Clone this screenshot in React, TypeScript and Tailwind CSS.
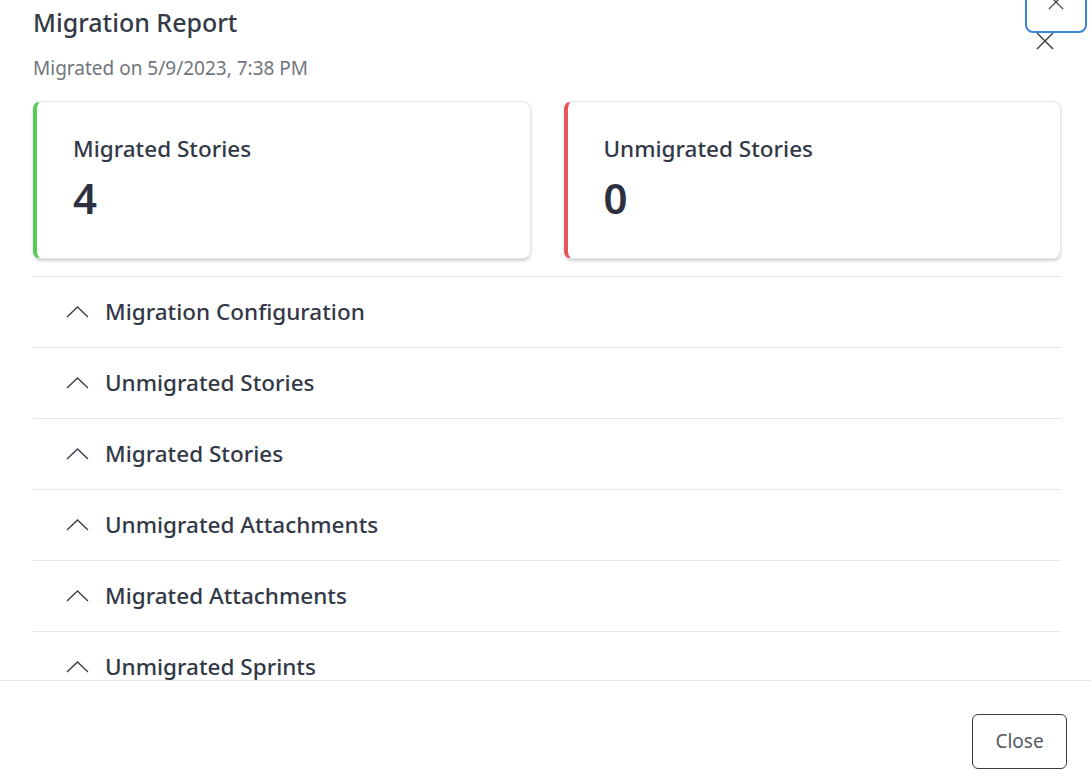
import React from 'react';

const sections = [
  'Migration Configuration',
  'Unmigrated Stories',
  'Migrated Stories',
  'Unmigrated Attachments',
  'Migrated Attachments',
  'Unmigrated Sprints',
];

const XIcon = ({ size = 18 }: { size?: number }) => (
  <svg width={size} height={size} viewBox="0 0 18 18" fill="none" stroke="#3a3f47" strokeWidth="1.4">
    <line x1="1" y1="1" x2="17" y2="17" />
    <line x1="17" y1="1" x2="1" y2="17" />
  </svg>
);

const ChevronUp = () => (
  <svg width="23" height="12" viewBox="0 0 23 12" fill="none" stroke="#3a3f47" strokeWidth="1.4">
    <polyline points="1,11 11.5,1 22,11" />
  </svg>
);

const StatCard = ({ label, value, accent }: { label: string; value: number; accent: string }) => (
  <div
    className={`h-[158px] rounded-[8px] border border-[#e3e5e8] border-l-4 ${accent} bg-white pl-[36px] pt-[32px] shadow-[0_2px_3px_rgba(0,0,0,0.18)]`}
  >
    <div className="text-[22.5px] leading-[30px] font-medium text-[#323846]">{label}</div>
    <div className="mt-[9px] text-[42px] leading-[50px] font-semibold text-[#2b3140]">{value}</div>
  </div>
);

const App = () => {
  return (
    <div className="relative flex h-[780px] w-full flex-col overflow-hidden bg-white font-['Noto_Sans',sans-serif] text-[#323846]">
      {/* focused close button peeking in from the top */}
      <div className="absolute right-[4px] top-[-20px] flex h-[53px] w-[62px] justify-center rounded-[8px] border-2 border-[#3a86d4] pt-[12px]">
        <XIcon size={16} />
      </div>

      <div className="flex-1 overflow-hidden">
        <div className="flex items-start justify-between pl-[33px] pr-[37px] pt-[6px]">
          <div>
            <h1 className="text-[25px] leading-[32px] font-medium text-[#343a46]">Migration Report</h1>
            <p className="mt-[17px] text-[19px] leading-[26px] text-[#70757d]">Migrated on 5/9/2023, 7:38 PM</p>
          </div>
          <button className="mt-[26px]">
            <XIcon size={18} />
          </button>
        </div>

        <div className="mt-[20px] grid grid-cols-2 gap-[33px] pl-[33px] pr-[30px]">
          <StatCard label="Migrated Stories" value={4} accent="border-l-[#55cc55]" />
          <StatCard label="Unmigrated Stories" value={0} accent="border-l-[#e85457]" />
        </div>

        <div className="ml-[33px] mr-[30px] mt-[17px]">
          {sections.map((title) => (
            <div key={title} className="flex h-[71px] items-center gap-[16px] border-t border-[#e6e7e9] pl-[33px]">
              <ChevronUp />
              <span className="text-[22.5px] font-medium text-[#323846]">{title}</span>
            </div>
          ))}
        </div>
      </div>

      <div className="flex h-[100px] shrink-0 justify-end border-t border-[#e6e7e9] pr-[24px] pt-[33px]">
        <button className="h-[55px] w-[95px] rounded-[6px] border border-[#3a3f47] text-[19px] text-[#555a61]">
          Close
        </button>
      </div>
    </div>
  );
};

export default App;
